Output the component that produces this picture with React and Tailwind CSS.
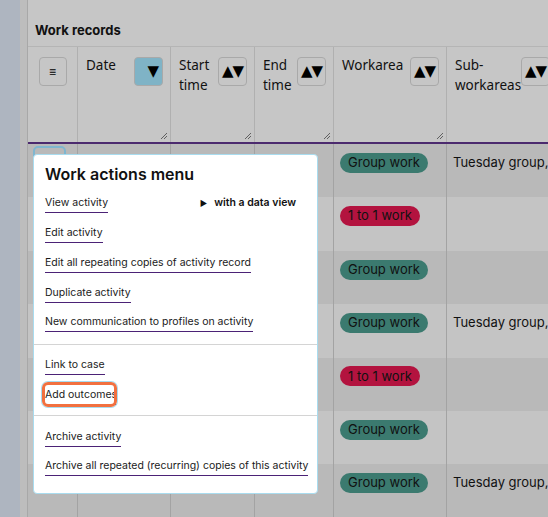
import React from "react";

const Handle = () => (
  <svg className="absolute right-[2px] bottom-[2px]" width="8" height="8" viewBox="0 0 8 8">
    <line x1="1" y1="7" x2="7" y2="1" stroke="#555" strokeWidth="0.9" />
    <line x1="4" y1="7" x2="7" y2="4" stroke="#555" strokeWidth="0.9" />
  </svg>
);

const SortBtn = ({ active, only }) => (
  <div
    className={
      "w-[29px] h-[29px] shrink-0 rounded-[4px] border border-[#a9a9a9] flex items-center justify-center text-[15px] leading-none text-black " +
      (active ? "bg-[#7fb3c6] justify-end pr-[3px]" : "")
    }
    style={{ fontFamily: "'DejaVu Sans', sans-serif" }}
  >
    {only ? "▼" : <span className="tracking-[-1px]">▲▼</span>}
  </div>
);

const HeadCell = ({ w, label, active, only, last }) => (
  <div
    className={
      "relative h-full flex justify-between pl-[8px] pr-[7px] pt-[10px] " +
      (last ? "flex-1 min-w-0" : "shrink-0 border-r border-[#b0b0b0]")
    }
    style={{ width: w }}
  >
    <div className="text-[13.5px] leading-[20px] text-[#111] -mt-[2px] whitespace-nowrap">{label}</div>
    <SortBtn active={active} only={only} />
    {!last && <Handle />}
  </div>
);

const Badge = ({ kind }) =>
  kind === "g" ? (
    <span className="inline-flex items-center h-[20px] px-[8px] rounded-full bg-[#3b7a6f] text-[13px] text-[#111] whitespace-nowrap">
      Group work
    </span>
  ) : (
    <span className="inline-flex items-center h-[20px] px-[8px] rounded-full bg-[#b3133f] text-[13px] text-[#111] whitespace-nowrap">
      1 to 1 work
    </span>
  );

const rows = [
  { b: "g", t: true },
  { b: "r", t: false },
  { b: "g", t: false },
  { b: "g", t: true },
  { b: "r", t: false },
  { b: "g", t: false },
  { b: "g", t: true },
];

const widths = [50, 93, 84, 79, 113];

const Item = ({ children, extra }) => (
  <div className="h-[29.75px] flex items-center pl-[11px]">
    <span className="leading-[13px] pb-[3px] border-b-[1.5px] border-[#4b2276] text-[10.5px] text-[#1a1a1a] whitespace-nowrap">
      {children}
    </span>
    {extra}
  </div>
);

export default function App() {
  return (
    <div
      className="relative w-[548px] h-[517px] overflow-hidden flex bg-[#c6c6c6]"
      style={{ fontFamily: "Inter, 'Noto Sans', sans-serif" }}
    >
      <div className="w-[20px] h-full shrink-0 bg-[#aeb5c0]" />
      <div className="w-[8px] h-full shrink-0 bg-[#bdbdbd] border-r border-[#a8a8a8]" />
      <div className="flex-1 flex flex-col min-w-0">
        <div className="h-[47px] shrink-0 border-b border-[#b5b5b5] flex items-end pl-[7px] pb-[6px]">
          <div className="text-[13px] font-bold text-[#111] leading-[20px]">Work records</div>
        </div>
        <div
          className="h-[97px] shrink-0 flex border-b-2 border-[#4b2a6e]"
          style={{ fontFamily: "'Noto Sans', sans-serif" }}
        >
          <div className="relative w-[50px] shrink-0 h-full border-r border-[#b0b0b0] flex justify-center pt-[10px]">
            <div className="w-[28px] h-[29px] rounded-[4px] border border-[#a9a9a9] flex items-center justify-center text-[12px] text-black leading-none">
              ≡
            </div>
          </div>
          <HeadCell w={93} label="Date" active only />
          <HeadCell w={84} label={<>Start<br />time</>} />
          <HeadCell w={79} label={<>End<br />time</>} />
          <HeadCell w={113} label="Workarea" />
          <HeadCell label={<>Sub-<br />workareas</>} last />
        </div>
        {rows.map((r, i) => (
          <div
            key={i}
            className={"h-[53.4px] shrink-0 flex " + (i % 2 === 0 ? "bg-[#b9b9b9]" : "bg-[#c4c4c4]")}
          >
            {widths.map((w, j) => (
              <div
                key={j}
                className="h-full shrink-0 border-r border-[#a3a3a3] pt-[5px] pl-[6px]"
                style={{ width: w }}
              >
                {j === 0 && i === 0 && (
                  <div className="w-[33px] h-[30px] -ml-[1px] -mt-[3px] rounded-[5px] border-2 border-[#7fb6cf]" />
                )}
                {j === 4 && <Badge kind={r.b} />}
              </div>
            ))}
            <div className="flex-1 min-w-0 pt-[10px] pl-[6px] text-[13px] text-[#111] whitespace-nowrap leading-[16px] overflow-hidden">
              {r.t ? "Tuesday group," : ""}
            </div>
          </div>
        ))}
      </div>

      <div className="absolute left-[33px] top-[154px] w-[285px] h-[340px] bg-white border border-[#a9dcef] rounded-[4px] pt-[3px]">
        <div className="h-[32px] flex items-center pl-[11px] text-[16px] font-semibold text-[#111]">
          Work actions menu
        </div>
        <Item
          extra={
            <span className="ml-auto mr-[21px] -mt-[4px] text-[10.5px] font-semibold text-[#111] flex items-center">
              <span className="text-[8px] mr-[7px]">▶</span>with a data view
            </span>
          }
        >
          View activity
        </Item>
        <Item>Edit activity</Item>
        <Item>Edit all repeating copies of activity record</Item>
        <Item>Duplicate activity</Item>
        <Item>New communication to profiles on activity</Item>
        <div className="mt-[5px] mb-[7px] border-t border-[#d4d4d4]" />
        <Item>Link to case</Item>
        <div className="h-[29.75px] flex items-center pl-[11px]">
          <span className="relative leading-[13px] pb-[3px] border-b-[1.5px] border-[#4b2276] text-[10.5px] text-[#1a1a1a] whitespace-nowrap">
            Add outcomes
            <span className="absolute -left-[3px] -top-[6px] w-[75px] h-[25px] rounded-[6px] border-[3px] border-[#f2703f] shadow-[0_0_0_1px_#a9dcef]" />
          </span>
        </div>
        <div className="mt-[4px] mb-[7px] border-t border-[#d4d4d4]" />
        <Item>Archive activity</Item>
        <Item>Archive all repeated (recurring) copies of this activity</Item>
      </div>
    </div>
  );
}
